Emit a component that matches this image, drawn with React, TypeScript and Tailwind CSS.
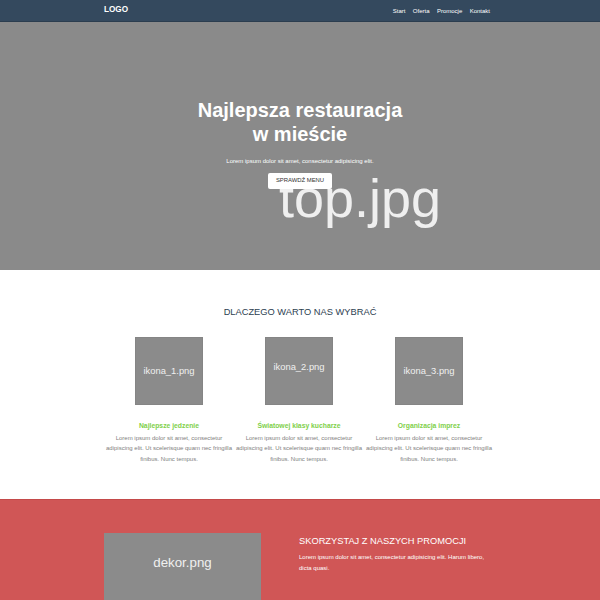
import React from "react";

const font = { fontFamily: '"Liberation Sans", Arial, sans-serif' };

const cards = [
  { img: "ikona_1.png", title: "Najlepsze jedzenie", shift: false },
  { img: "ikona_2.png", title: "Światowej klasy kucharze", shift: true },
  { img: "ikona_3.png", title: "Organizacja imprez", shift: false },
];

export default function App() {
  return (
    <div style={font} className="w-full min-h-[600px] bg-white">
      {/* NAV */}
      <nav className="h-[22px] bg-[#34495e] border-b border-[#2b3d4f]">
        <div className="w-[392px] mx-auto h-full flex items-center justify-between">
          <span className="text-white font-bold text-[8.2px] leading-none">LOGO</span>
          <ul className="flex items-center gap-[7.4px] pr-[6px] text-white text-[6px] leading-none">
            <li>Start</li>
            <li>Oferta</li>
            <li>Promocje</li>
            <li>Kontakt</li>
          </ul>
        </div>
      </nav>

      {/* HERO */}
      <header className="relative h-[248px] bg-[#8a8a8a] flex flex-col items-center pt-[76px] overflow-hidden">
        <span className="absolute left-[279px] top-[149px] text-[54px] leading-[54px] text-[#efefef] select-none">
          top.jpg
        </span>
        <h1 className="relative z-10 text-white font-bold text-[20px] leading-[24px] text-center">
          Najlepsza restauracja
          <br />
          w mieście
        </h1>
        <p className="relative z-10 mt-[11px] text-white text-[6px] leading-[9px]">
          Lorem ipsum dolor sit amet, consectetur adipisicing elit.
        </p>
        <button className="relative z-10 mt-[7px] w-[64px] h-[16px] bg-white rounded-[2px] text-[#333] text-[5.9px] leading-none">
          SPRAWDŹ MENU
        </button>
      </header>

      {/* WHY US */}
      <section className="h-[229px] bg-white pt-[36px]">
        <h2 className="text-center text-[#2c3e50] text-[9.3px] leading-[12px]">
          DLACZEGO WARTO NAS WYBRAĆ
        </h2>
        <div className="w-[392px] mx-auto mt-[19px]">
          <div className="w-[390px] grid grid-cols-3">
            {cards.map((c) => (
              <div key={c.img} className="flex flex-col items-center px-[1px]">
                <div className="w-[68px] h-[68px] bg-[#8b8b8b] border border-[#858585] flex items-center justify-center">
                  <span className={`text-[#f0f0f0] text-[9.4px] leading-[12px] ${c.shift ? "-mt-[8px]" : ""}`}>
                    {c.img}
                  </span>
                </div>
                <h3 className="mt-[17px] text-[#80d04a] font-bold text-[6.8px] leading-[8px]">{c.title}</h3>
                <p className="mt-[3px] text-center text-[#808080] text-[6px] leading-[10.3px]">
                  Lorem ipsum dolor sit amet, consectetur adipiscing elit. Ut scelerisque quam nec fringilla finibus. Nunc tempus.
                </p>
              </div>
            ))}
          </div>
        </div>
      </section>

      {/* PROMO */}
      <section className="bg-[#d05656] border-t border-[#c44a4a] pt-[33px] pb-[20px]">
        <div className="w-[392px] mx-auto flex">
          <div className="w-[157px] h-[120px] bg-[#8b8b8b] flex justify-center pt-[22px] shrink-0">
            <span className="text-[#f0f0f0] text-[13.3px] leading-[16px]">dekor.png</span>
          </div>
          <div className="ml-[38px] flex-1 pt-[2px]">
            <h2 className="text-white text-[9.3px] leading-[12px]">SKORZYSTAJ Z NASZYCH PROMOCJI</h2>
            <p className="mt-[5px] text-white text-[6px] leading-[10.5px]">
              Lorem ipsum dolor sit amet, consectetur adipisicing elit. Harum libero, dicta quasi.
            </p>
          </div>
        </div>
      </section>
    </div>
  );
}
